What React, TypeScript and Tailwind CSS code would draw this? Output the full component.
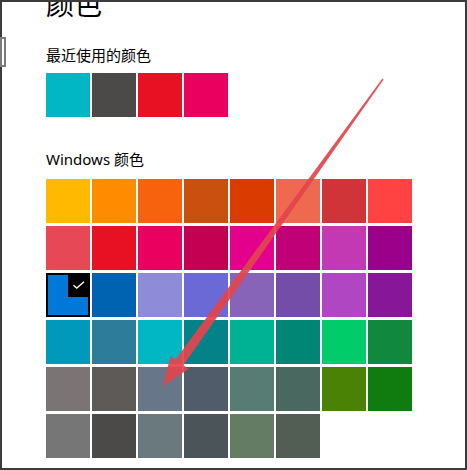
const recent = ["#00B7C3", "#4C4A48", "#E81123", "#EA005E"];

const windowsColors = [
    ["#FFB900", "#FF8C00", "#F7630C", "#CA5010", "#DA3B01", "#EF6950", "#D13438", "#FF4343"],
    ["#E74856", "#E81123", "#EA005E", "#C30052", "#E3008C", "#BF0077", "#C239B3", "#9A0089"],
    ["#0078D7", "#0063B1", "#8E8CD8", "#6B69D6", "#8764B8", "#744DA9", "#B146C2", "#881798"],
    ["#0099BC", "#2D7D9A", "#00B7C3", "#038387", "#00B294", "#018574", "#00CC6A", "#10893E"],
    ["#7A7574", "#5D5A58", "#68768A", "#515C6B", "#567C73", "#486860", "#498205", "#107C10"],
    ["#767676", "#4C4A48", "#69797E", "#4A5459", "#647C64", "#525E54"],
];

function Swatch({ color, selected }: { color: string; selected?: boolean }) {
    if (selected) {
        return (
            <div className="relative w-[44px] h-[44px] border-2 border-black" style={{ backgroundColor: color }}>
                <div className="absolute -top-[2px] -right-[2px] w-[22px] h-[24px] bg-black flex items-center justify-center">
                    <svg width="14" height="10" viewBox="0 0 14 10" fill="none">
                        <path d="M1.5 5.2 L4.8 8 L12 1.8" stroke="white" strokeWidth="1.4" />
                    </svg>
                </div>
            </div>
        );
    }
    return <div className="w-[44px] h-[44px]" style={{ backgroundColor: color }} />;
}

export default function App() {
    return (
        <div className="relative w-[467px] h-[470px] bg-[#3b3b3b] p-[2px] overflow-hidden">
            <div
                className="w-full h-full bg-white pl-[44px] flex flex-col text-black overflow-hidden"
                style={{ fontFamily: '"Noto Sans", "Noto Sans CJK SC", sans-serif' }}
            >
                <div className="text-[28px] leading-[28px] -mt-[12px]">颜色</div>
                <div className="mt-[27px] text-[15px] leading-[20px]">最近使用的颜色</div>
                <div className="mt-[8px] flex gap-[2px]">
                    {recent.map((c, i) => (
                        <Swatch key={i} color={c} />
                    ))}
                </div>
                <div className="mt-[32px] text-[15px] leading-[20px]">Windows 颜色</div>
                <div className="mt-[10px] flex flex-col gap-[3px]">
                    {windowsColors.map((row, r) => (
                        <div key={r} className="flex gap-[2px]">
                            {row.map((c, i) => (
                                <Swatch key={i} color={c} selected={r === 2 && i === 0} />
                            ))}
                        </div>
                    ))}
                </div>
            </div>

            {/* window edge bracket on the left */}
            <div className="absolute left-0 top-[37px] w-[6px] h-[30px] border-2 border-[#7c7c7c] bg-white" />

            {/* red annotation arrow */}
            <svg className="absolute left-0 top-0 pointer-events-none" width="467" height="470" viewBox="0 0 467 470">
                <polygon
                    points="383.6,79.4 382.4,78.6 175.6,359.6 170.5,356 163,386 188.5,369 183.4,365.3"
                    fill="#e2454d"
                    fillOpacity="0.93"
                />
            </svg>
        </div>
    );
}
